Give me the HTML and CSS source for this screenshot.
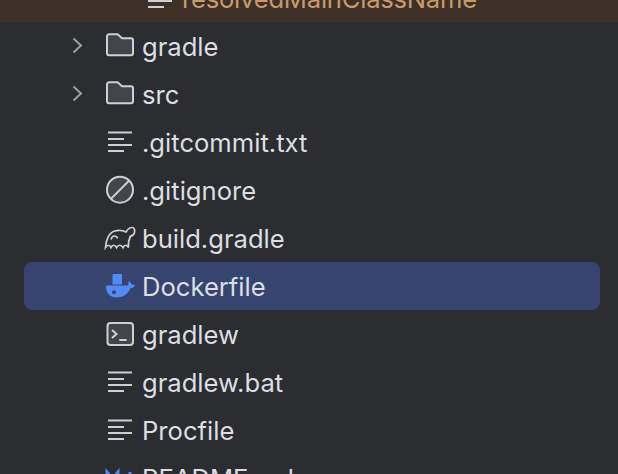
FILE: index.html
```html
<!DOCTYPE html>
<html lang="en">
<head>
    <meta charset="UTF-8">
    <title>Project files</title>
    <link rel="stylesheet" href="styles.css">
</head>
<body>
<ul class="tree">
    <li class="row row-changed">
        <span class="arrow"></span>
        <svg class="icon" viewBox="0 0 32 32"><path class="line" d="M4 6.500h24M4 13h16M4 19h24M4 25h16"/></svg>
        <span class="name">resolvedMainClassName</span>
    </li>
    <li class="row">
        <span class="arrow"><svg viewBox="0 0 12 18"><path d="M1.500 1.500l7.500 7-7.500 7"/></svg></span>
        <svg class="icon" viewBox="0 0 32 32"><path class="fill" d="M3 6.300a2 2 0 0 1 2-2h8.700l4.300 4h9a2 2 0 0 1 2 2v13a2 2 0 0 1-2 2H5a2 2 0 0 1-2-2z"/></svg>
        <span class="name">gradle</span>
    </li>
    <li class="row">
        <span class="arrow"><svg viewBox="0 0 12 18"><path d="M1.500 1.500l7.500 7-7.500 7"/></svg></span>
        <svg class="icon" viewBox="0 0 32 32"><path class="fill" d="M3 6.300a2 2 0 0 1 2-2h8.700l4.300 4h9a2 2 0 0 1 2 2v13a2 2 0 0 1-2 2H5a2 2 0 0 1-2-2z"/></svg>
        <span class="name">src</span>
    </li>
    <li class="row">
        <span class="arrow"></span>
        <svg class="icon" viewBox="0 0 32 32"><path class="line" d="M4 6.500h24M4 13h16M4 19h24M4 25h16"/></svg>
        <span class="name">.gitcommit.txt</span>
    </li>
    <li class="row">
        <span class="arrow"></span>
        <svg class="icon" viewBox="0 0 32 32"><circle class="fill" cx="16" cy="15.700" r="13"/><path class="line" d="M7 24.700L25 6.700"/></svg>
        <span class="name">.gitignore</span>
    </li>
    <li class="row">
        <span class="arrow"></span>
        <svg class="icon" viewBox="0 0 32 32"><path class="thin" d="M1.500 25.500C2 18 5 11 10 9.300 14 8 18.500 8.300 22 10 23.500 7.500 25 5.500 28 5.500 30.500 5.500 31 8 30.500 10.500 30 12.500 28.500 14 26.500 14 25 17 24 21 24.500 25.500 23 22.500 20.500 22.500 19 25.500 17.500 22.500 14 22.500 12.500 25.500 11 22.500 8.500 22.500 7 25.500 5.500 22.500 3.500 22.500 1.500 25.500zM7 17.500C8 13 12.500 13 13.500 16.500"/></svg>
        <span class="name">build.gradle</span>
    </li>
    <li class="row row-selected">
        <span class="arrow"></span>
        <svg class="icon" viewBox="0 0 32 32"><path class="docker" d="M8.500 5a1 1 0 0 1 1-1h7.500a1 1 0 0 1 1 1v9.500H8.500zM3 15.500H23.500C24 15.500 24.500 13 25 11 26.500 12 27.500 13.500 27.500 14.500 29 14.500 30.500 15 31 15.500 30 17.500 28 18 26.500 18 24 24 19 27.500 13 27.500 6 27.500 2 23 2 16.500 2 16 2.500 15.500 3 15.500z"/><circle class="hole" cx="10" cy="22.300" r="2"/></svg>
        <span class="name">Dockerfile</span>
    </li>
    <li class="row">
        <span class="arrow"></span>
        <svg class="icon" viewBox="0 0 32 32"><rect class="fill" x="3.500" y="5" width="25.500" height="22" rx="3"/><path class="line" d="M8 12l4.500 4-4.500 4M15.300 22h7.400"/></svg>
        <span class="name">gradlew</span>
    </li>
    <li class="row">
        <span class="arrow"></span>
        <svg class="icon" viewBox="0 0 32 32"><path class="line" d="M4 6.500h24M4 13h16M4 19h24M4 25h16"/></svg>
        <span class="name">gradlew.bat</span>
    </li>
    <li class="row">
        <span class="arrow"></span>
        <svg class="icon" viewBox="0 0 32 32"><path class="line" d="M4 6.500h24M4 13h16M4 19h24M4 25h16"/></svg>
        <span class="name">Procfile</span>
    </li>
    <li class="row">
        <span class="arrow"></span>
        <svg class="icon" viewBox="0 0 32 32"><path class="md" d="M3 25V10l5.500 7L14 10v15M26 10v15"/></svg>
        <span class="name">README.md</span>
    </li>
</ul>
</body>
</html>
```

FILE: styles.css
```css
html {
    background: #2b2d30;
}
body {
    margin: 0;
    height: 474px;
    overflow: hidden;
    font-family: Inter, "Noto Sans", sans-serif;
}
.tree {
    list-style: none;
    margin: -26px 0 0 0;
    padding: 0;
}
.row {
    display: flex;
    align-items: center;
    height: 48px;
    padding-left: 72px;
    color: #dcdee3;
    font-size: 25.6px;
}
.row-changed {
    background: #3c3027;
    padding-left: 112px;
}
.row-changed .name {
    color: #c99a6b;
    letter-spacing: -0.24px;
}
.row-selected {
    background: #36456f;
    border-radius: 8px;
    margin: 0 18px 0 24px;
    padding-left: 48px;
}
.arrow {
    display: flex;
    width: 12px;
    margin-right: 20px;
}
.arrow svg {
    width: 12px;
    height: 18px;
}
.arrow path {
    fill: none;
    stroke: #9da0a8;
    stroke-width: 2;
}
.icon {
    width: 32px;
    height: 32px;
    flex: none;
    margin-right: 6px;
}
.line {
    fill: none;
    stroke: #ced0d6;
    stroke-width: 2;
}
.fill {
    fill: #43454a;
    stroke: #ced0d6;
    stroke-width: 2;
}
.thin {
    fill: none;
    stroke: #ced0d6;
    stroke-width: 1.700;
}
.docker {
    fill: #548af7;
}
.hole {
    fill: #36456f;
}
.md {
    fill: none;
    stroke: #548af7;
    stroke-width: 3;
}
```
